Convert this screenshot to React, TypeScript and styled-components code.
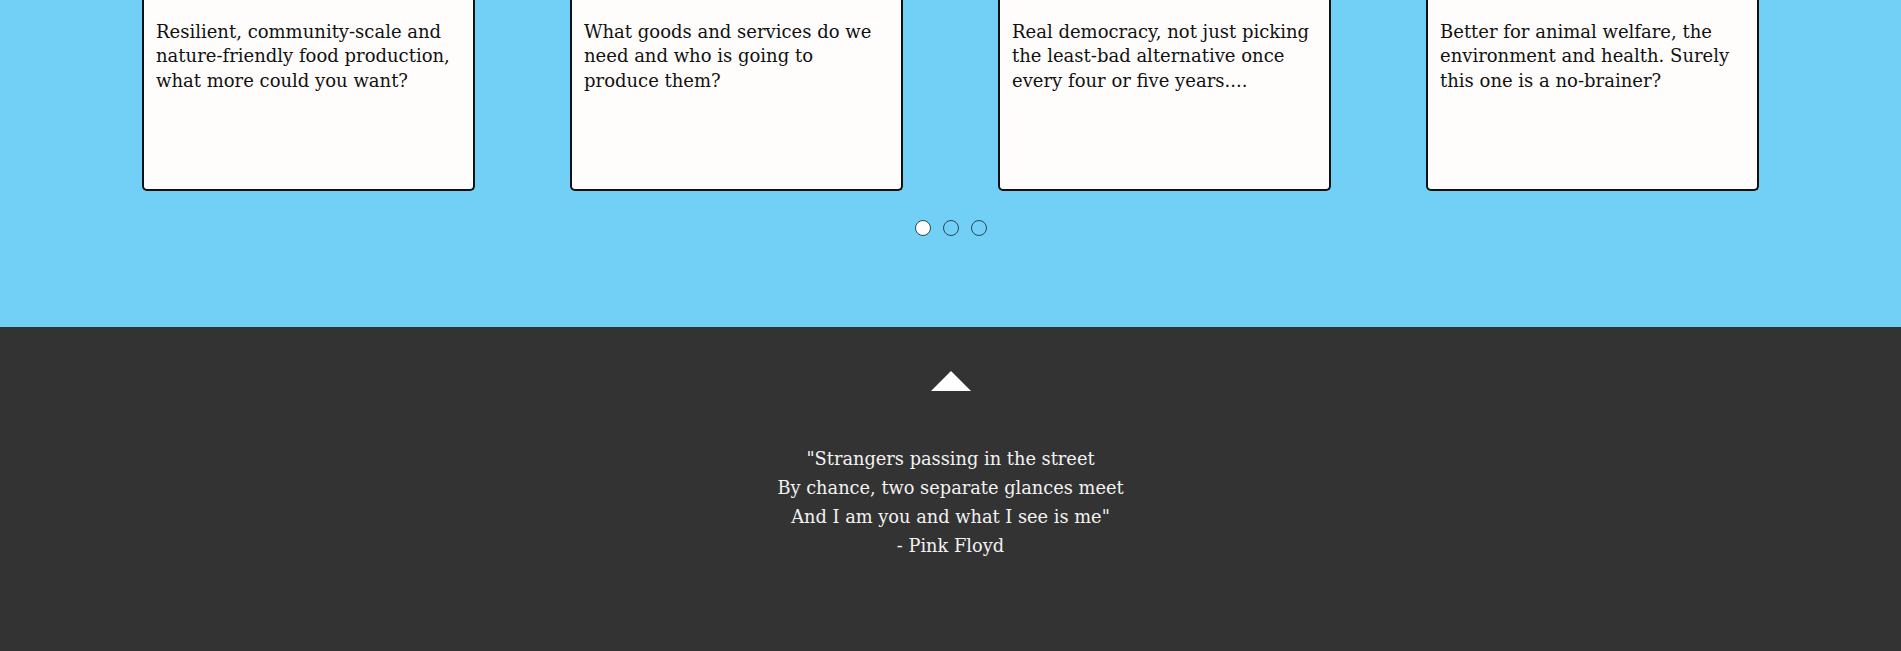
import { createGlobalStyle, styled } from "styled-components";

const GlobalStyle = createGlobalStyle`
  html, body {
    margin: 0;
    padding: 0;
    background: #333333;
  }
  body {
    font-family: "DejaVu Serif", "Liberation Serif", serif;
  }
`;

const Causes = styled.section`
  background: #72cff6;
  height: 327px;
  display: flex;
  flex-direction: column;
  align-items: center;
`;

const CardRow = styled.div`
  display: flex;
  gap: 95px;
  justify-content: center;
`;

const Card = styled.div`
  box-sizing: border-box;
  width: 333px;
  height: 191px;
  background: #fefdfc;
  border: 2px solid #111;
  border-top: none;
  border-radius: 0 0 5px 5px;
  padding: 20px 12px 0 12px;
  color: #111;
  font-size: 18px;
  line-height: 24.3px;
`;

const Dots = styled.div`
  display: flex;
  gap: 12px;
  margin-top: 29px;
`;

const Dot = styled.span<{ $active?: boolean }>`
  box-sizing: border-box;
  width: 16px;
  height: 16px;
  border-radius: 50%;
  border: 1px solid #2c4656;
  background: ${(p) => (p.$active ? "#ffffff" : "transparent")};
`;

const Footer = styled.footer`
  background: #333333;
  height: 324px;
  display: flex;
  flex-direction: column;
  align-items: center;
  padding-top: 44px;
  box-sizing: border-box;
`;

const UpArrow = styled.div`
  width: 0;
  height: 0;
  border-left: 20px solid transparent;
  border-right: 20px solid transparent;
  border-bottom: 20px solid #ffffff;
`;

const Quote = styled.p`
  margin: 53px 0 0 0;
  color: #f2f2f2;
  text-align: center;
  font-size: 17.8px;
  line-height: 29px;
`;

const causes = [
  "Resilient, community-scale and nature-friendly food production, what more could you want?",
  "What goods and services do we need and who is going to produce them?",
  "Real democracy, not just picking the least-bad alternative once every four or five years....",
  "Better for animal welfare, the environment and health. Surely this one is a no-brainer?",
];

const App = () => {
  return (
    <>
      <GlobalStyle />
      <Causes>
        <CardRow>
          {causes.map((text) => (
            <Card key={text}>{text}</Card>
          ))}
        </CardRow>
        <Dots>
          <Dot $active />
          <Dot />
          <Dot />
        </Dots>
      </Causes>
      <Footer>
        <UpArrow />
        <Quote>
          "Strangers passing in the street
          <br />
          By chance, two separate glances meet
          <br />
          And I am you and what I see is me"
          <br />- Pink Floyd
        </Quote>
      </Footer>
    </>
  );
};

export default App;
